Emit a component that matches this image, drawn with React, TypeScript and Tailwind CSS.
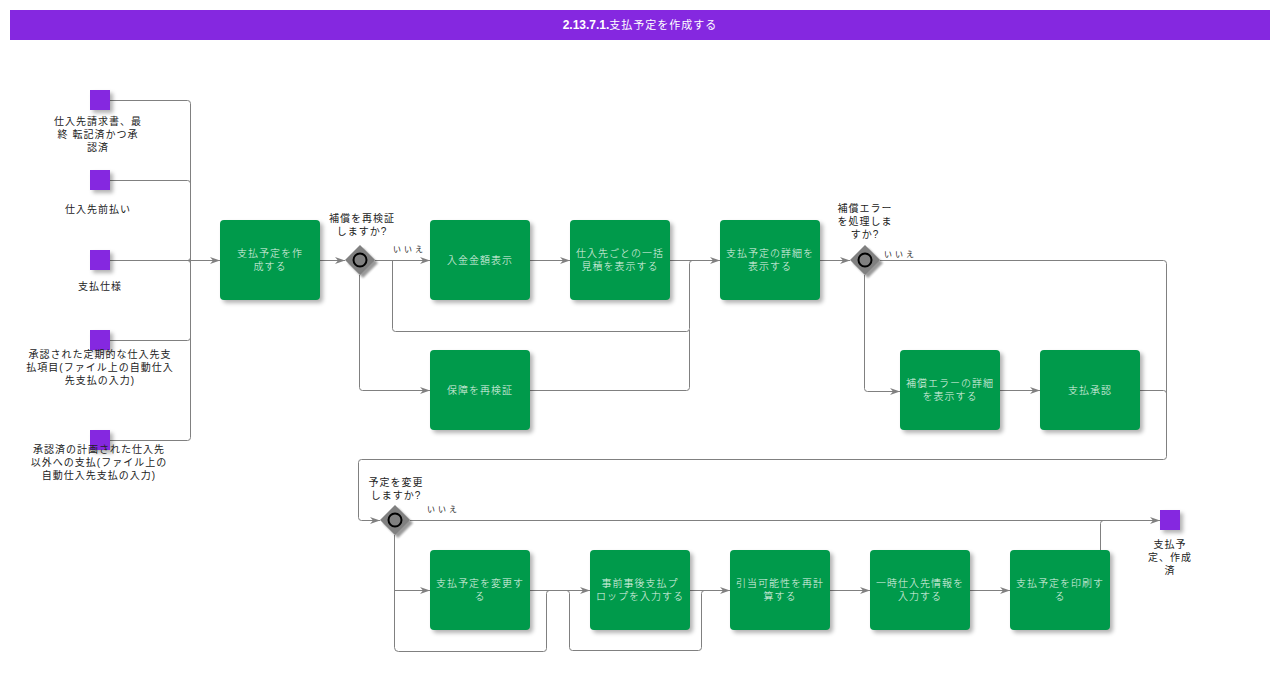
const tasks = [
  { cls: "left-[220px] top-[220px]", lines: ["支払予定を作", "成する"] },
  { cls: "left-[430px] top-[220px]", lines: ["入金金額表示"] },
  { cls: "left-[570px] top-[220px]", lines: ["仕入先ごとの一括", "見積を表示する"] },
  { cls: "left-[720px] top-[220px]", lines: ["支払予定の詳細を", "表示する"] },
  { cls: "left-[430px] top-[350px]", lines: ["保障を再検証"] },
  { cls: "left-[900px] top-[350px]", lines: ["補償エラーの詳細", "を表示する"] },
  { cls: "left-[1040px] top-[350px]", lines: ["支払承認"] },
  { cls: "left-[430px] top-[550px]", lines: ["支払予定を変更す", "る"] },
  { cls: "left-[590px] top-[550px]", lines: ["事前事後支払プ", "ロップを入力する"] },
  { cls: "left-[730px] top-[550px]", lines: ["引当可能性を再計", "算する"] },
  { cls: "left-[870px] top-[550px]", lines: ["一時仕入先情報を", "入力する"] },
  { cls: "left-[1010px] top-[550px]", lines: ["支払予定を印刷す", "る"] },
];

const events = [
  "left-[90px] top-[90px]",
  "left-[90px] top-[170px]",
  "left-[90px] top-[250px]",
  "left-[90px] top-[330px]",
  "left-[90px] top-[430px]",
  "left-[1160px] top-[510px]",
];

const labels = [
  { cls: "left-[98px] top-[115px]", lines: ["仕入先請求書、最", "終 転記済かつ承", "認済"] },
  { cls: "left-[98px] top-[203px]", lines: ["仕入先前払い"] },
  { cls: "left-[100px] top-[280px]", lines: ["支払仕様"] },
  { cls: "left-[100px] top-[348px]", lines: ["承認された定期的な仕入先支", "払項目(ファイル上の自動仕入", "先支払の入力)"] },
  { cls: "left-[99px] top-[443px]", lines: ["承認済の計画された仕入先", "以外への支払(ファイル上の", "自動仕入先支払の入力)"] },
  { cls: "left-[362px] top-[212px]", lines: ["補償を再検証", "しますか?"] },
  { cls: "left-[865px] top-[202px]", lines: ["補償エラー", "を処理しま", "すか?"] },
  { cls: "left-[396px] top-[476px]", lines: ["予定を変更", "しますか?"] },
  { cls: "left-[1170px] top-[538px]", lines: ["支払予", "定、作成", "済"] },
];

const noLabels = [
  "left-[393px] top-[245px]",
  "left-[884px] top-[250px]",
  "left-[427px] top-[505px]",
];

const gateways = [
  [360, 260],
  [865, 260],
  [395, 520],
];

const lines = [
  // inputs into the vertical bus
  "M110 100.5H187.5Q190.5 100.5 190.5 103.5V437.5Q190.5 440.5 187.5 440.5H110",
  "M110 180.5H187.5Q190.5 180.5 190.5 183.5",
  "M110 260.5H220",
  "M187.5 260.5Q190.5 260.5 190.5 257.5",
  "M187.5 260.5Q190.5 260.5 190.5 263.5",
  "M110 340.5H187.5Q190.5 340.5 190.5 337.5",
  // first gateway
  "M320 260.5H345",
  "M375 260.5H430",
  "M392.5 260.5V328.5Q392.5 331.5 395.5 331.5H686.5Q689.5 331.5 689.5 328.5V263.5Q689.5 260.5 692.5 260.5",
  "M359.5 275V387.5Q359.5 390.5 362.5 390.5H430",
  "M530 390.5H686.5Q689.5 390.5 689.5 387.5V330",
  "M530 260.5H570",
  "M670 260.5H720",
  "M820 260.5H850",
  // second gateway
  "M880 260.5H1163.5Q1166.5 260.5 1166.5 263.5V456.5Q1166.5 459.5 1163.5 459.5H361.5Q358.5 459.5 358.5 462.5V517.5Q358.5 520.5 361.5 520.5H380",
  "M864.5 275V388.5Q864.5 391.5 867.5 391.5H900",
  "M1000 390.5H1040",
  "M1140 390.5H1163.5Q1166.5 390.5 1166.5 393.5",
  // third gateway
  "M410 520.5H1160",
  "M394.5 535V647.5Q394.5 651.5 398.5 651.5H543.5Q546.5 651.5 546.5 648.5V593.5Q546.5 590.5 549.5 590.5H590",
  "M394.5 590.5H430",
  "M530 590.5H566.5Q569.5 590.5 569.5 593.5V647.5Q569.5 650.5 572.5 650.5H698.5Q701.5 650.5 701.5 647.5V593.5Q701.5 590.5 704.5 590.5H730",
  "M690 590.5H730",
  "M830 590.5H870",
  "M970 590.5H1010",
  "M1100.5 550V523.5Q1100.5 520.5 1103.5 520.5H1160",
];

const arrows = [
  [220, 260],
  [345, 260],
  [430, 260],
  [430, 390],
  [570, 260],
  [720, 260],
  [850, 260],
  [900, 391],
  [1040, 390],
  [380, 520],
  [1160, 520],
  [430, 590],
  [590, 590],
  [730, 590],
  [870, 590],
  [1010, 590],
];

function Stack({ lines }: { lines: string[] }) {
  return (
    <>
      {lines.map((line) => (
        <div key={line} className="whitespace-nowrap">
          {line}
        </div>
      ))}
    </>
  );
}

export default function App() {
  return (
    <div className="relative w-[1280px] h-[680px] overflow-hidden bg-white font-['Liberation_Sans','Noto_Sans_CJK_JP',sans-serif]">
      <div className="mx-[10px] mt-[10px] h-[30px] flex items-center justify-center bg-[#8528e0] text-white text-[11px] tracking-[1px]">
        <span className="text-xs font-bold tracking-normal">2.13.7.1.</span>
        支払予定を作成する
      </div>

      <svg className="absolute left-0 top-0" width="1280" height="680" fill="none">
        <defs>
          <filter id="soft" x="-30%" y="-30%" width="170%" height="170%">
            <feGaussianBlur stdDeviation="1.2" />
          </filter>
        </defs>
        {lines.map((d) => (
          <path key={d} d={d} stroke="#808080" strokeWidth="1" />
        ))}
        {arrows.map(([x, y]) => (
          <path
            key={`${x}-${y}`}
            d={`M${x} ${y + 0.5}l-10 -3.6l3 3.6l-3 3.6z`}
            fill="#808080"
          />
        ))}
        {gateways.map(([x, y]) => (
          <g key={x}>
            <path d={`M${x + 3} ${y - 12}l15 15l-15 15l-15 -15z`} fill="#000" opacity="0.4" filter="url(#soft)" />
            <path d={`M${x} ${y - 15}l15 15l-15 15l-15 -15z`} fill="#808080" />
            <circle cx={x} cy={y} r="6.5" fill="#808080" stroke="#000" strokeWidth="2" />
          </g>
        ))}
      </svg>

      {events.map((cls) => (
        <div key={cls} className={`absolute w-5 h-5 bg-[#8528e0] shadow-[3px_3px_4px_rgba(0,0,0,0.3)] ${cls}`} />
      ))}

      {tasks.map((t) => (
        <div
          key={t.cls}
          className={`absolute w-[100px] h-[80px] flex flex-col items-center justify-center rounded bg-[#009a4b] text-[#e6f6ec] text-[10px] tracking-[1px] leading-[13px] font-light shadow-[3px_3px_4px_rgba(0,0,0,0.3)] ${t.cls}`}
        >
          <Stack lines={t.lines} />
        </div>
      ))}

      {labels.map((l) => (
        <div
          key={l.cls}
          className={`absolute -translate-x-1/2 text-center text-[#222] text-[10px] tracking-[1px] leading-[13px] ${l.cls}`}
        >
          <Stack lines={l.lines} />
        </div>
      ))}

      {noLabels.map((cls) => (
        <div key={cls} className={`absolute text-[8px] leading-[10px] tracking-[3px] text-[#222] ${cls}`}>
          いいえ
        </div>
      ))}
    </div>
  );
}
